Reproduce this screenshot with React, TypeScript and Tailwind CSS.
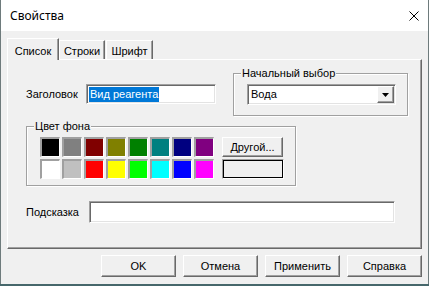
import React from "react";

const raised =
  "border border-t-white border-l-white border-r-[#696969] border-b-[#696969] shadow-[inset_-1px_-1px_0_#a0a0a0,inset_1px_1px_0_#f0f0f0]";
const sunken =
  "border border-t-[#a0a0a0] border-l-[#a0a0a0] border-r-white border-b-white shadow-[inset_1px_1px_0_#696969,inset_-1px_-1px_0_#e3e3e3]";
const etched = "border border-[#a0a0a0] shadow-[inset_1px_1px_0_#fff,1px_1px_0_#fff]";

const swatches = [
  ["#000000", "#808080", "#800000", "#808000", "#008000", "#008080", "#000080", "#800080"],
  ["#ffffff", "#c0c0c0", "#ff0000", "#ffff00", "#00ff00", "#00ffff", "#0000ff", "#ff00ff"],
];

const GroupBox: React.FC<{ title: string; className: string; children: React.ReactNode }> = ({
  title,
  className,
  children,
}) => (
  <div className={`relative ${etched} ${className}`}>
    <span className="absolute -top-[8px] left-[7px] bg-[#f0f0f0] px-[1px] leading-[14px]">{title}</span>
    {children}
  </div>
);

const Button: React.FC<{ label: string; className?: string }> = ({ label, className = "" }) => (
  <button className={`${raised} bg-[#f0f0f0] flex items-center justify-center text-[11px] ${className}`}>{label}</button>
);

export default function App() {
  return (
    <div className="w-[429px] h-[286px] bg-[#46676b] font-['Liberation_Sans',Arial,sans-serif] text-[11px] text-black">
      <div className="w-[429px] h-[284px] bg-[#f0f0f0] border-l border-r border-[#6e7b7c] flex flex-col">
        {/* Title bar */}
        <div className="h-[31px] bg-white flex items-center justify-between shrink-0">
          <span className="pl-[9px] text-[12px] font-['Noto_Sans',sans-serif] leading-none">Свойства</span>
          <svg width="10" height="10" viewBox="0 0 10 10" className="mr-[9px]">
            <path d="M0.5 0.5L9.5 9.5M9.5 0.5L0.5 9.5" stroke="#000" strokeWidth="1" />
          </svg>
        </div>

        {/* Tabs */}
        <div className="flex items-end pl-[6px] pt-[7px] h-[28px] shrink-0">
          <div className="relative z-10 h-[22px] w-[52px] -mb-[1px] bg-[#f0f0f0] border border-b-0 border-t-white border-l-white border-r-[#696969] shadow-[inset_-1px_0_0_#a0a0a0] flex items-start justify-center pt-[4px]">
            Список
          </div>
          <div className="h-[19px] w-[46px] bg-[#f0f0f0] border border-b-0 border-t-white border-l-white border-r-[#696969] shadow-[inset_-1px_0_0_#a0a0a0] flex items-start justify-center pt-[2px]">
            Строки
          </div>
          <div className="h-[19px] w-[47px] ml-[1px] bg-[#f0f0f0] border border-b-0 border-t-white border-l-white border-r-[#696969] shadow-[inset_-1px_0_0_#a0a0a0] flex items-start justify-center pt-[2px]">
            Шрифт
          </div>
        </div>

        {/* Panel */}
        <div className="ml-[6px] w-[415px] h-[190px] border border-t-white border-l-white border-r-[#696969] border-b-[#696969] shadow-[inset_-1px_-1px_0_#a0a0a0] pt-[13px] pl-[18px] flex flex-col shrink-0">
          <div className="flex items-start h-[43px]">
            <div className="flex items-center mt-[11px]">
              <span className="w-[60px]">Заголовок</span>
              <div className={`${sunken} bg-white w-[130px] h-[20px] flex items-center pl-[2px]`}>
                <span className="bg-[#0078d7] text-white leading-[15px] px-[1px]">Вид реагента</span>
              </div>
            </div>
            <GroupBox title="Начальный выбор" className="ml-[17px] w-[175px] h-[43px]">
              <div className={`${sunken} bg-white absolute left-[13px] top-[10px] w-[149px] h-[21px] flex items-center justify-between`}>
                <span className="pl-[3px]">Вода</span>
                <div className={`${raised} bg-[#f0f0f0] w-[17px] h-[17px] mr-[1px] flex items-center justify-center`}>
                  <svg width="7" height="4" viewBox="0 0 7 4">
                    <path d="M0 0H7L3.5 4Z" fill="#000" />
                  </svg>
                </div>
              </div>
            </GroupBox>
          </div>

          <GroupBox title="Цвет фона" className="mt-[10px] w-[270px] h-[60px]">
            <div className="flex pl-[13px] pt-[10px] gap-[8px]">
              <div className="grid grid-cols-8 gap-[2px]">
                {swatches.flat().map((c, i) => (
                  <div
                    key={i}
                    className="w-[20px] h-[20px] border-t-2 border-l-2 border-r border-b border-t-[#a0a0a0] border-l-[#a0a0a0] border-r-white border-b-white"
                    style={{ backgroundColor: c }}
                  />
                ))}
              </div>
              <div className="flex flex-col gap-[2px]">
                <Button label="Другой..." className="w-[61px] h-[20px]" />
                <div className="w-[62px] h-[20px] border border-[#a0a0a0] border-r-white border-b-white">
                  <div className="w-full h-full border border-black bg-[#f0f0f0]" />
                </div>
              </div>
            </div>
          </GroupBox>

          <div className="flex items-center mt-[15px]">
            <span className="w-[63px]">Подсказка</span>
            <div className={`${sunken} bg-white w-[306px] h-[22px]`} />
          </div>
        </div>

        {/* Buttons */}
        <div className="flex justify-end gap-[7px] pr-[6px] mt-[6px]">
          <Button label="OK" className="w-[75px] h-[22px]" />
          <Button label="Отмена" className="w-[75px] h-[22px]" />
          <Button label="Применить" className="w-[75px] h-[22px]" />
          <Button label="Справка" className="w-[75px] h-[22px]" />
        </div>
      </div>
    </div>
  );
}
